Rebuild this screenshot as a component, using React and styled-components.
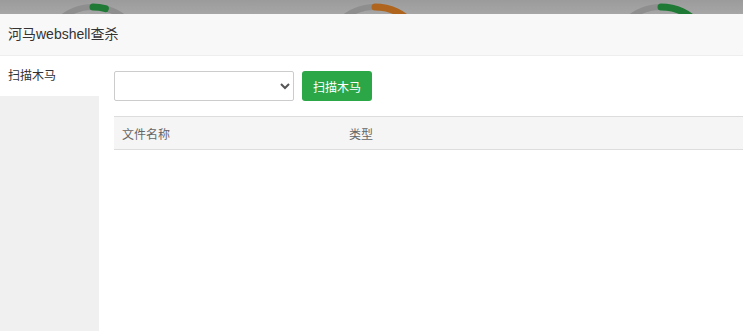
import styled, { createGlobalStyle } from "styled-components";

const GlobalStyle = createGlobalStyle`
  html, body {
    margin: 0;
    padding: 0;
  }
  body {
    font-family: "Liberation Sans", "Noto Sans CJK SC", sans-serif;
    color: #333;
  }
`;

const gauges = [
  { color: "#1f7a36", percent: 4 },
  { color: "#b0651f", percent: 14 },
  { color: "#1f7a36", percent: 14 },
];

const Gauge = ({ color, percent }) => {
  const r = 50;
  const c = 2 * Math.PI * r;
  return (
    <GaugeSvg width="120" height="120" viewBox="0 0 120 120">
      <circle cx="60" cy="60" r={r} fill="none" stroke="#8e8e8e" strokeWidth="6" />
      <circle
        cx="60"
        cy="60"
        r={r}
        fill="none"
        stroke={color}
        strokeWidth="7"
        strokeLinecap="round"
        strokeDasharray={`${(c * percent) / 100} ${c}`}
        transform="rotate(-90 60 60)"
      />
    </GaugeSvg>
  );
};

const App = () => {
  return (
    <>
      <GlobalStyle />
      <Page>
        <GaugeRow>
          {gauges.map((g, i) => (
            <Gauge key={i} color={g.color} percent={g.percent} />
          ))}
        </GaugeRow>

        <Modal>
          <Header>河马webshell查杀</Header>
          <Body>
            <Sidebar>
              <SideItem $active>扫描木马</SideItem>
            </Sidebar>
            <Content>
              <Toolbar>
                <Select>
                  <option value=""></option>
                </Select>
                <ScanBtn>扫描木马</ScanBtn>
              </Toolbar>
              <Table>
                <thead>
                  <tr>
                    <Th $width={211}>文件名称</Th>
                    <Th>类型</Th>
                  </tr>
                </thead>
                <tbody></tbody>
              </Table>
            </Content>
          </Body>
        </Modal>
      </Page>
    </>
  );
};

const Page = styled.div`
  position: relative;
  width: 743px;
  height: 331px;
  overflow: hidden;
  background: linear-gradient(180deg, #9b9b9b 0%, #a6a6a6 14px, #a6a6a6 100%);
`;

const GaugeRow = styled.div`
  display: flex;
  margin-top: -3px;
`;

const GaugeSvg = styled.svg`
  display: block;
  flex: none;
  &:nth-child(1) {
    margin-left: 33px;
  }
  &:nth-child(2) {
    margin-left: 162px;
  }
  &:nth-child(3) {
    margin-left: 166px;
  }
`;

const Modal = styled.div`
  position: absolute;
  top: 14px;
  left: 0;
  width: 800px;
  bottom: 0;
  background: #fff;
  display: flex;
  flex-direction: column;
`;

const Header = styled.div`
  height: 41px;
  line-height: 41px;
  padding-left: 8px;
  background: #f8f8f8;
  border-bottom: 1px solid #eee;
  font-size: 14px;
  color: #333;
`;

const Body = styled.div`
  flex: 1;
  display: flex;
`;

const Sidebar = styled.div`
  width: 99px;
  background: #f0f0f0;
  display: flex;
  flex-direction: column;
`;

const SideItem = styled.div`
  height: 40px;
  line-height: 40px;
  padding-left: 8px;
  font-size: 12px;
  color: #333;
  background: ${(p) => (p.$active ? "#fff" : "transparent")};
`;

const Content = styled.div`
  flex: 1;
  padding: 15px 0 0 15px;
  display: flex;
  flex-direction: column;
  gap: 15px;
`;

const Toolbar = styled.div`
  display: flex;
  align-items: center;
  gap: 8px;
`;

const Select = styled.select`
  width: 180px;
  height: 30px;
  border: 1px solid #ccc;
  border-radius: 2px;
  background: #fff;
  font-size: 12px;
  color: #555;
`;

const ScanBtn = styled.button`
  width: 70px;
  height: 30px;
  border: none;
  border-radius: 3px;
  background: #2ca748;
  color: #fff;
  font-size: 12px;
  font-family: inherit;
  cursor: pointer;
`;

const Table = styled.table`
  width: 100%;
  border-collapse: collapse;
`;

const Th = styled.th`
  width: ${(p) => (p.$width ? `${p.$width}px` : "auto")};
  height: 32px;
  padding: 0 8px;
  text-align: left;
  font-weight: normal;
  font-size: 12px;
  color: #666;
  background: #f5f5f5;
  border-top: 1px solid #ddd;
  border-bottom: 1px solid #ddd;
`;

export default App;
